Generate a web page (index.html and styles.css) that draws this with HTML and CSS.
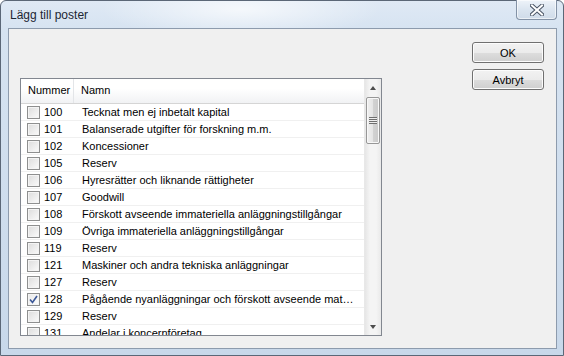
FILE: index.html
```html
<!DOCTYPE html>
<html lang="sv">
<head>
    <meta charset="UTF-8">
    <title>Lägg till poster</title>
    <link rel="stylesheet" href="styles.css">
</head>
<body>
    <div class="window">
        <div class="titlebar">
            <span class="title">Lägg till poster</span>
            <div class="close">
                <svg width="14" height="12" viewBox="0 0 14 12">
                    <path d="M2 1.5 L12 10.5 M12 1.5 L2 10.5" stroke="#4a5565" stroke-width="4" stroke-linecap="square"/>
                    <path d="M2 1.5 L12 10.5 M12 1.5 L2 10.5" stroke="#ffffff" stroke-width="2" stroke-linecap="square"/>
                </svg>
            </div>
        </div>

        <div class="client">
            <div class="list">
                <div class="list-body">
                    <div class="list-header">
                        <div class="col-num">Nummer</div>
                        <div class="col-name">Namn</div>
                    </div>
                    <div class="row"><span class="check"></span><span class="num">100</span><span class="name">Tecknat men ej inbetalt kapital</span></div>
                    <div class="row"><span class="check"></span><span class="num">101</span><span class="name">Balanserade utgifter för forskning m.m.</span></div>
                    <div class="row"><span class="check"></span><span class="num">102</span><span class="name">Koncessioner</span></div>
                    <div class="row"><span class="check"></span><span class="num">105</span><span class="name">Reserv</span></div>
                    <div class="row"><span class="check"></span><span class="num">106</span><span class="name">Hyresrätter och liknande rättigheter</span></div>
                    <div class="row"><span class="check"></span><span class="num">107</span><span class="name">Goodwill</span></div>
                    <div class="row"><span class="check"></span><span class="num">108</span><span class="name">Förskott avseende immateriella anläggningstillgångar</span></div>
                    <div class="row"><span class="check"></span><span class="num">109</span><span class="name">Övriga immateriella anläggningstillgångar</span></div>
                    <div class="row"><span class="check"></span><span class="num">119</span><span class="name">Reserv</span></div>
                    <div class="row"><span class="check"></span><span class="num">121</span><span class="name">Maskiner och andra tekniska anläggningar</span></div>
                    <div class="row"><span class="check"></span><span class="num">127</span><span class="name">Reserv</span></div>
                    <div class="row"><span class="check checked">
                        <svg width="9" height="9" viewBox="0 0 9 9"><path d="M1 4.5 L3.5 7.5 L8 1" fill="none" stroke="#3b5797" stroke-width="1.6"/></svg>
                    </span><span class="num">128</span><span class="name">Pågående nyanläggningar och förskott avseende materiella anläggningstillgångar</span></div>
                    <div class="row"><span class="check"></span><span class="num">129</span><span class="name">Reserv</span></div>
                    <div class="row"><span class="check"></span><span class="num">131</span><span class="name">Andelar i koncernföretag</span></div>
                </div>
                <div class="scrollbar">
                    <div class="arrow up"></div>
                    <div class="thumb"><span class="grip"></span></div>
                    <div class="track"></div>
                    <div class="arrow down"></div>
                </div>
            </div>

            <div class="buttons">
                <button class="button default">OK</button>
                <button class="button">Avbryt</button>
            </div>
        </div>
    </div>
</body>
</html>
```

FILE: styles.css
```css
* {
    box-sizing: border-box;
}

body {
    margin: 0;
    font-family: "Liberation Sans", Arial, sans-serif;
    font-size: 11px;
    color: #000000;
    background: #ffffff;
}

.window {
    width: 564px;
    height: 356px;
    display: flex;
    flex-direction: column;
    border: 1px solid #5b6777;
    border-radius: 6px 6px 0 0;
    background:
        radial-gradient(ellipse 140px 30px at 240px 8px, rgba(255, 255, 255, 0.7), rgba(255, 255, 255, 0)),
        linear-gradient(to bottom, #dfe9f5 0px, #d6e3f1 30px, #c8d8ea 100%);
}

.titlebar {
    height: 27px;
    display: flex;
    align-items: flex-start;
}

.title {
    margin: 7px 0 0 9px;
    font-size: 12px;
    color: #1c2633;
}

.close {
    margin-left: auto;
    margin-right: 6px;
    margin-top: -1px;
    width: 41px;
    height: 20px;
    display: flex;
    align-items: center;
    justify-content: center;
    border: 1px solid #8392a6;
    border-top: none;
    border-radius: 0 0 4px 4px;
    background: linear-gradient(to bottom, #eef3f9, #dbe5f0 50%, #cfdbe9);
    box-shadow: inset 0 0 0 1px rgba(255, 255, 255, 0.6);
}

.client {
    flex: 1;
    margin: 0 6px 6px 7px;
    display: flex;
    justify-content: space-between;
    align-items: flex-start;
    padding: 13px 12px 0 11px;
    background: #f0f0f0;
    border: 1px solid #8d9bad;
}

/* lista */
.list {
    margin-top: 36px;
    width: 362px;
    height: 258px;
    display: flex;
    border: 1px solid #828790;
    background: #ffffff;
}

.list-body {
    flex: 1;
    overflow: hidden;
}

.list-header {
    height: 25px;
    display: flex;
    align-items: center;
    background: linear-gradient(to bottom, #ffffff 0%, #ffffff 40%, #f1f2f4 100%);
    border-bottom: 1px solid #d5d5d5;
}

.col-num {
    width: 53px;
    height: 100%;
    padding: 5px 0 0 7px;
    border-right: 1px solid #e3e5e8;
}

.col-name {
    height: 100%;
    padding: 5px 0 0 7px;
}

.row {
    height: 17px;
    display: flex;
    align-items: center;
    border-bottom: 1px solid #f0f0f0;
}

.check {
    width: 13px;
    height: 13px;
    margin-left: 6px;
    display: flex;
    align-items: center;
    justify-content: center;
    border: 1px solid #8e8f8f;
    background: linear-gradient(135deg, #dcdcdc, #fbfbfb);
    box-shadow: inset 0 0 0 1px #f4f4f4;
}

.check.checked {
    background: linear-gradient(135deg, #e8e8e8, #fdfdfd);
}

.num {
    width: 38px;
    padding-left: 4px;
}

.name {
    flex: 1;
    padding-left: 4px;
    white-space: nowrap;
    overflow: hidden;
    text-overflow: ellipsis;
    padding-right: 5px;
}

/* scrollbar */
.scrollbar {
    width: 17px;
    display: flex;
    flex-direction: column;
    background: linear-gradient(to right, #e6e6e6, #f4f4f4 30%, #f4f4f4 70%, #e9e9e9);
    border-left: 1px solid #e8e8e8;
}

.arrow {
    height: 17px;
    display: flex;
    justify-content: center;
    align-items: center;
}

.arrow.up::after {
    content: "";
    border-left: 3.5px solid transparent;
    border-right: 3.5px solid transparent;
    border-bottom: 4px solid #4d4d4d;
}

.arrow.down::after {
    content: "";
    border-left: 3.5px solid transparent;
    border-right: 3.5px solid transparent;
    border-top: 4px solid #4d4d4d;
}

.thumb {
    height: 47px;
    margin: 1px 1px 0 1px;
    display: flex;
    align-items: center;
    justify-content: center;
    border: 1px solid #979797;
    border-radius: 2px;
    background: linear-gradient(to right, #f0f0f0, #e4e4e4 50%, #d2d2d2 51%, #cacaca);
    box-shadow: inset 0 0 0 1px #f8f8f8;
}

.grip {
    width: 8px;
    height: 7px;
    background: repeating-linear-gradient(to bottom, #6e6e6e 0px, #6e6e6e 1px, #eeeeee 1px, #eeeeee 2px);
}

.track {
    flex: 1;
}

/* knappar */
.buttons {
    display: flex;
    flex-direction: column;
    gap: 6px;
}

.button {
    width: 72px;
    height: 21px;
    padding: 0;
    font-family: "Liberation Sans", Arial, sans-serif;
    font-size: 11px;
    color: #000000;
    border: 1px solid #707070;
    border-radius: 3px;
    background: linear-gradient(to bottom, #f2f2f2 0%, #ebebeb 50%, #dddddd 51%, #cfcfcf 100%);
    box-shadow: inset 0 0 0 1px #fcfcfc;
}
```
